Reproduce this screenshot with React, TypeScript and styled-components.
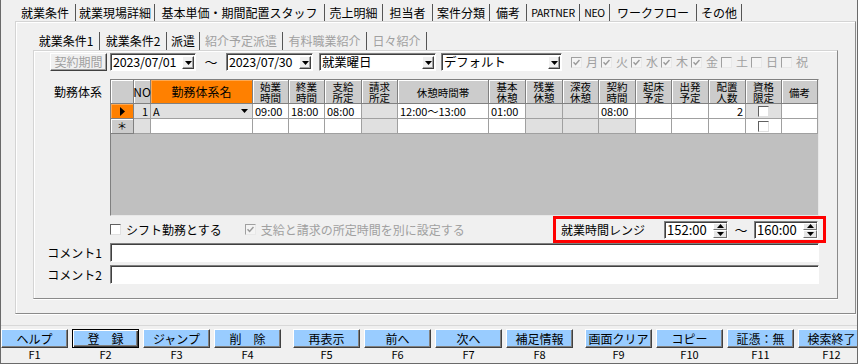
import React from "react";
import styled, { createGlobalStyle } from "styled-components";

const GlobalStyle = createGlobalStyle`
  html, body {
    margin: 0;
    padding: 0;
    background: #f0f0f0;
  }
  body {
    font-family: "Noto Sans CJK JP", "Noto Sans", sans-serif;
    font-size: 12px;
    color: #000;
  }
  * {
    box-sizing: border-box;
  }
`;

const OUTER_TABS: [string, number, boolean][] = [
  ["就業条件", 61, false],
  ["就業現場詳細", 79, false],
  ["基本単価・期間配置スタッフ", 170, false],
  ["売上明細", 58, false],
  ["担当者", 50, false],
  ["案件分類", 57, false],
  ["備考", 37, false],
  ["PARTNER", 53, true],
  ["NEO", 30, true],
  ["ワークフロー", 87, false],
  ["その他", 45, false],
];

const INNER_TABS: [string, number, boolean][] = [
  ["就業条件1", 67, false],
  ["就業条件2", 67, false],
  ["派遣", 33, false],
  ["紹介予定派遣", 83, true],
  ["有料職業紹介", 84, true],
  ["日々紹介", 60, true],
];

const DAYS: [string, boolean][] = [
  ["月", true],
  ["火", true],
  ["水", true],
  ["木", true],
  ["金", true],
  ["土", false],
  ["日", false],
  ["祝", false],
];

const COLS = [23, 17, 102, 36, 36, 37, 36, 91, 37, 37, 36, 37, 36, 37, 37, 36, 36];

const HEADERS: string[][] = [
  ["始業", "時間"],
  ["終業", "時間"],
  ["支給", "所定"],
  ["請求", "所定"],
  ["休憩時間帯"],
  ["基本", "休憩"],
  ["残業", "休憩"],
  ["深夜", "休憩"],
  ["契約", "時間"],
  ["起床", "予定"],
  ["出発", "予定"],
  ["配置", "人数"],
  ["資格", "限定"],
  ["備考"],
];

type CellData = { text?: string; muted?: boolean; right?: boolean; check?: boolean };

const ROW1: CellData[] = [
  { text: "09:00" },
  { text: "18:00" },
  { text: "08:00" },
  { muted: true },
  { text: "12:00～13:00" },
  { text: "01:00" },
  { muted: true },
  { muted: true },
  { text: "08:00" },
  {},
  {},
  { text: "2", right: true },
  { muted: true, check: true },
  {},
];

const ROW2: CellData[] = [
  {},
  {},
  {},
  { muted: true },
  {},
  {},
  { muted: true },
  { muted: true },
  { muted: true },
  {},
  {},
  {},
  { check: true },
  {},
];

const FKEYS: { label: string; key: string; primary?: boolean }[][] = [
  [
    { label: "ヘルプ", key: "F1" },
    { label: "登　録", key: "F2", primary: true },
    { label: "ジャンプ", key: "F3" },
    { label: "削　除", key: "F4" },
  ],
  [
    { label: "再表示", key: "F5" },
    { label: "前へ", key: "F6" },
    { label: "次へ", key: "F7" },
    { label: "補足情報", key: "F8" },
  ],
  [
    { label: "画面クリア", key: "F9" },
    { label: "コピー", key: "F10" },
    { label: "証憑：無", key: "F11" },
    { label: "検索終了", key: "F12" },
  ],
];

const DownArrow = () => (
  <svg width="7" height="4" viewBox="0 0 7 4">
    <polygon points="0,0 7,0 3.5,4" fill="#000" />
  </svg>
);

const UpArrow = () => (
  <svg width="7" height="4" viewBox="0 0 7 4">
    <polygon points="0,4 7,4 3.5,0" fill="#000" />
  </svg>
);

const RightArrow = () => (
  <svg width="5" height="9" viewBox="0 0 5 9">
    <polygon points="0,0 5,4.5 0,9" fill="#000" />
  </svg>
);

const CheckMark = ({ color }: { color: string }) => (
  <svg width="7" height="7" viewBox="0 0 7 7">
    <path d="M0.5 3.2 L2.6 5.4 L6.5 1" stroke={color} strokeWidth="1.5" fill="none" />
  </svg>
);

const Check: React.FC<{ checked?: boolean; disabled?: boolean }> = ({ checked, disabled }) => (
  <CheckBox $disabled={disabled}>
    {checked && <CheckMark color={disabled ? "#9a9a9a" : "#000"} />}
  </CheckBox>
);

const Spinner: React.FC<{ value: string }> = ({ value }) => (
  <Spin>
    <SpinValue>{value}</SpinValue>
    <SpinButtons>
      <SpinBtn>
        <UpArrow />
      </SpinBtn>
      <SpinBtn>
        <DownArrow />
      </SpinBtn>
    </SpinButtons>
  </Spin>
);

const DropDown: React.FC<{ value: string; w: number; gap?: number }> = ({ value, w, gap }) => (
  <Combo $w={w} $gap={gap}>
    <ComboText>{value}</ComboText>
    <ComboArrow>
      <DownArrow />
    </ComboArrow>
  </Combo>
);

const App: React.FC = () => {
  return (
    <>
      <GlobalStyle />
      <Window>
        <TopTabs>
          {OUTER_TABS.map(([t, w, narrow]) => (
            <TopTab key={t} $w={w} $narrow={narrow}>
              {t}
            </TopTab>
          ))}
        </TopTabs>

        <OuterPanel>
          <InnerTabs>
            {INNER_TABS.map(([t, w, off]) => (
              <InnerTab key={t} $w={w} $disabled={off}>
                {t}
              </InnerTab>
            ))}
          </InnerTabs>

          <InnerPanel>
            <ControlRow>
              <LabelCell $pad={3}>
                <PeriodButton>契約期間</PeriodButton>
              </LabelCell>
              <DropDown value="2023/07/01" w={86} />
              <Tilde $w={30}>～</Tilde>
              <DropDown value="2023/07/30" w={87} gap={6} />
              <DropDown value="就業曜日" w={117} gap={5} />
              <DropDown value="デフォルト" w={121} gap={9} />
              <DayList>
                {DAYS.map(([d, on]) => (
                  <DayItem key={d}>
                    <Check checked={on} disabled />
                    <span>{d}</span>
                  </DayItem>
                ))}
              </DayList>
            </ControlRow>

            <GridRow>
              <LabelCell $pad={8} $top>
                勤務体系
              </LabelCell>
              <Grid>
                <HeadCell />
                <HeadCell>NO</HeadCell>
                <HeadCell $accent>勤務体系名</HeadCell>
                {HEADERS.map((lines) => (
                  <HeadCell key={lines.join("")}>
                    {lines.map((l) => (
                      <HeadLine key={l}>{l}</HeadLine>
                    ))}
                  </HeadCell>
                ))}

                <RowMark $current>
                  <RightArrow />
                </RowMark>
                <Cell $muted $right>
                  1
                </Cell>
                <Cell $muted $between>
                  <span>A</span>
                  <DownArrow />
                </Cell>
                {ROW1.map((c, i) => (
                  <Cell key={i} $muted={c.muted} $right={c.right} $center={c.check}>
                    {c.check ? <Check /> : c.text}
                  </Cell>
                ))}

                <RowMark>＊</RowMark>
                <Cell $muted />
                <Cell />
                {ROW2.map((c, i) => (
                  <Cell key={i} $muted={c.muted} $right={c.right} $center={c.check}>
                    {c.check ? <Check /> : c.text}
                  </Cell>
                ))}
              </Grid>
            </GridRow>

            <OptionRow>
              <LabelCell $pad={0} />
              <OptionItem>
                <Check />
                <span>シフト勤務とする</span>
              </OptionItem>
              <OptionItem $disabled $gap={23}>
                <Check checked disabled />
                <span>支給と請求の所定時間を別に設定する</span>
              </OptionItem>
              <RangeBox>
                <RangeLabel>就業時間レンジ</RangeLabel>
                <Spinner value="152:00" />
                <Tilde $w={26}>～</Tilde>
                <Spinner value="160:00" />
              </RangeBox>
            </OptionRow>

            <CommentRow>
              <LabelCell $pad={8}>コメント1</LabelCell>
              <TextInput />
            </CommentRow>
            <CommentRow $gap={3}>
              <LabelCell $pad={8}>コメント2</LabelCell>
              <TextInput />
            </CommentRow>
          </InnerPanel>
        </OuterPanel>

        <FunctionBar>
          {FKEYS.map((group, gi) => (
            <FGroup key={gi}>
              {group.map((k) => (
                <FKey key={k.key}>
                  <FButton $primary={k.primary}>{k.label}</FButton>
                  <FLabel>{k.key}</FLabel>
                </FKey>
              ))}
            </FGroup>
          ))}
        </FunctionBar>
      </Window>
    </>
  );
};

const Window = styled.div`
  width: 858px;
  height: 364px;
  display: flex;
  flex-direction: column;
  background: #f0f0f0;
  border: 1px solid #6a6a6a;
  border-top: none;
  overflow: hidden;
`;

const TopTabs = styled.div`
  flex: none;
  display: flex;
  align-items: flex-end;
  height: 21px;
  padding-left: 14px;
`;

const TopTab = styled.div<{ $w: number; $narrow?: boolean }>`
  width: ${(p) => p.$w}px;
  height: 17px;
  display: flex;
  align-items: center;
  justify-content: center;
  border-right: 1px solid #555;
  font-size: ${(p) => (p.$narrow ? 10.5 : 12)}px;
  letter-spacing: ${(p) => (p.$narrow ? "-0.3px" : "0")};
  line-height: 17px;
  white-space: nowrap;
`;

const OuterPanel = styled.div`
  flex: none;
  height: 293px;
  margin: 0 1px 0 14px;
  padding: 10px 17px 14px 17px;
  display: flex;
  flex-direction: column;
  border-style: solid;
  border-width: 1px;
  border-color: #d4d4d4 #8a8a8a #8a8a8a #d4d4d4;
  box-shadow: inset 1px 1px 0 #fff, 0 1px 0 #fff;
`;

const InnerTabs = styled.div`
  flex: none;
  display: flex;
  height: 18px;
`;

const InnerTab = styled.div<{ $w: number; $disabled?: boolean }>`
  width: ${(p) => p.$w}px;
  display: flex;
  align-items: center;
  justify-content: center;
  border-right: 1px solid #555;
  color: ${(p) => (p.$disabled ? "#a0a0a0" : "#000")};
  font-size: 12px;
  line-height: 18px;
  white-space: nowrap;
`;

const InnerPanel = styled.div`
  flex: 1;
  padding: 2px 18px 0 0;
  display: flex;
  flex-direction: column;
  border-style: solid;
  border-width: 1px;
  border-color: #d4d4d4 #8a8a8a #8a8a8a #d4d4d4;
  box-shadow: inset 1px 1px 0 #fff, 0 1px 0 #fff;
`;

const LabelCell = styled.div<{ $pad: number; $top?: boolean }>`
  flex: none;
  width: 76px;
  display: flex;
  justify-content: flex-end;
  align-items: ${(p) => (p.$top ? "flex-start" : "center")};
  padding-right: ${(p) => p.$pad}px;
  padding-top: ${(p) => (p.$top ? 6 : 0)}px;
  font-size: 12px;
  line-height: 14px;
  white-space: nowrap;
`;

const ControlRow = styled.div`
  display: flex;
  align-items: center;
  height: 18px;
`;

const PeriodButton = styled.div`
  width: 57px;
  height: 18px;
  display: flex;
  align-items: center;
  justify-content: center;
  background: #f0f0f0;
  color: #a0a0a0;
  font-size: 12px;
  border: 1px solid;
  border-color: #fff #404040 #404040 #fff;
  box-shadow: inset -1px -1px 0 #a0a0a0;
`;

const Combo = styled.div<{ $w: number; $gap?: number }>`
  flex: none;
  width: ${(p) => p.$w}px;
  height: 18px;
  margin-right: ${(p) => p.$gap ?? 0}px;
  display: flex;
  background: #fff;
  border: 1px solid;
  border-color: #808080 #fff #fff #808080;
  box-shadow: inset 1px 1px 0 #404040;
`;

const ComboText = styled.span`
  flex: 1;
  min-width: 0;
  padding-left: 2px;
  font-size: 12.5px;
  line-height: 16px;
  letter-spacing: -0.2px;
  white-space: nowrap;
`;

const ComboArrow = styled.span`
  flex: none;
  width: 12px;
  margin: 2px 1px 1px 0;
  display: flex;
  align-items: center;
  justify-content: center;
  background: #f0f0f0;
  border: 1px solid;
  border-color: #fff #404040 #404040 #fff;
  box-shadow: inset -1px -1px 0 #a0a0a0;
`;

const Tilde = styled.span<{ $w: number }>`
  flex: none;
  width: ${(p) => p.$w}px;
  text-align: center;
  font-size: 13px;
  line-height: 16px;
`;

const DayList = styled.div`
  display: flex;
`;

const DayItem = styled.div`
  width: 30px;
  display: flex;
  align-items: center;
  gap: 4px;
  color: #a0a0a0;
  font-size: 12px;
  line-height: 14px;
`;

const CheckBox = styled.span<{ $disabled?: boolean }>`
  flex: none;
  width: 11px;
  height: 11px;
  display: inline-flex;
  align-items: center;
  justify-content: center;
  background: ${(p) => (p.$disabled ? "#f4f4f4" : "#fff")};
  border: 1px solid;
  border-color: ${(p) =>
    p.$disabled ? "#a0a0a0 #e8e8e8 #e8e8e8 #a0a0a0" : "#606060 #e0e0e0 #e0e0e0 #606060"};
`;

const GridRow = styled.div`
  display: flex;
  margin-top: 8px;
`;

const Grid = styled.div`
  width: 709px;
  height: 137px;
  display: grid;
  grid-template-columns: ${COLS.map((c) => `${c}px`).join(" ")};
  grid-template-rows: 24px 15px 15px;
  align-content: start;
  background: #c0c0c0;
  border: 1px solid;
  border-color: #808080 #e8e8e8 #e8e8e8 #808080;
`;

const HeadCell = styled.div<{ $accent?: boolean }>`
  display: flex;
  flex-direction: column;
  align-items: center;
  justify-content: center;
  text-align: center;
  font-size: 12px;
  line-height: 14px;
  padding-top: 1px;
  background: ${(p) => (p.$accent ? "#ff8000" : "#cccccc")};
  border-right: 1px solid #808080;
  border-bottom: 1px solid #808080;
  box-shadow: inset 1px 1px 0 ${(p) => (p.$accent ? "#ffa850" : "#fff")};
`;

const HeadLine = styled.span`
  display: block;
  height: 11px;
  font-size: 10.5px;
  line-height: 11px;
  white-space: nowrap;
`;

const RowMark = styled.div<{ $current?: boolean }>`
  display: flex;
  align-items: center;
  justify-content: center;
  font-size: 10px;
  line-height: 14px;
  background: ${(p) => (p.$current ? "#ff8000" : "#cccccc")};
  border-right: 1px solid #808080;
  border-bottom: 1px solid #808080;
  box-shadow: inset 1px 1px 0 ${(p) => (p.$current ? "#ffa850" : "#fff")};
`;

const Cell = styled.div<{ $muted?: boolean; $right?: boolean; $center?: boolean; $between?: boolean }>`
  display: flex;
  align-items: center;
  justify-content: ${(p) =>
    p.$between ? "space-between" : p.$center ? "center" : p.$right ? "flex-end" : "flex-start"};
  padding: 0 ${(p) => (p.$between ? 4 : 2)}px 0 2px;
  background: ${(p) => (p.$muted ? "#e0e0e0" : "#fff")};
  border-right: 1px solid #a0a0a0;
  border-bottom: 1px solid #a0a0a0;
  font-size: 11px;
  line-height: 14px;
  white-space: nowrap;
  overflow: hidden;
`;

const OptionRow = styled.div`
  width: 792px;
  height: 27px;
  display: flex;
  align-items: center;
`;

const OptionItem = styled.div<{ $disabled?: boolean; $gap?: number }>`
  display: flex;
  align-items: center;
  gap: 5px;
  margin-left: ${(p) => p.$gap ?? 0}px;
  color: ${(p) => (p.$disabled ? "#a0a0a0" : "#000")};
  font-size: 12px;
  line-height: 14px;
  white-space: nowrap;
`;

const RangeBox = styled.div`
  margin-left: auto;
  width: 273px;
  height: 27px;
  display: flex;
  align-items: center;
  padding: 0 5px;
  border: 3px solid #ff0000;
`;

const RangeLabel = styled.span`
  width: 103px;
  font-size: 12px;
  line-height: 14px;
  white-space: nowrap;
`;

const Spin = styled.div`
  flex: none;
  width: 64px;
  height: 18px;
  display: flex;
  background: #fff;
  border: 1px solid;
  border-color: #808080 #fff #fff #808080;
  box-shadow: inset 1px 1px 0 #404040;
`;

const SpinValue = styled.span`
  flex: 1;
  padding-left: 2px;
  font-size: 13px;
  line-height: 16px;
`;

const SpinButtons = styled.div`
  width: 14px;
  margin: 1px 0 0 0;
  display: flex;
  flex-direction: column;
`;

const SpinBtn = styled.div`
  flex: 1;
  display: flex;
  align-items: center;
  justify-content: center;
  background: #e6e6e6;
  border: 1px solid;
  border-color: #fff #707070 #707070 #fff;
`;

const CommentRow = styled.div<{ $gap?: number }>`
  display: flex;
  height: 19px;
  margin-top: ${(p) => p.$gap ?? 0}px;
`;

const TextInput = styled.div`
  width: 709px;
  height: 19px;
  background: #fff;
  border: 1px solid;
  border-color: #808080 #fff #fff #808080;
  box-shadow: inset 1px 1px 0 #404040;
`;

const FunctionBar = styled.div`
  flex: none;
  margin-top: 11px;
  padding-top: 3px;
  border-top: 1px solid #d8d8d8;
  display: flex;
  gap: 12px;
`;

const FGroup = styled.div`
  display: flex;
  gap: 4px;
`;

const FKey = styled.div`
  width: 67px;
  flex: none;
  display: flex;
  flex-direction: column;
`;

const FButton = styled.div<{ $primary?: boolean }>`
  height: 19px;
  display: flex;
  align-items: center;
  justify-content: center;
  background: #99ccff;
  font-size: 12px;
  line-height: 17px;
  white-space: nowrap;
  border: 1px solid;
  border-color: ${(p) => (p.$primary ? "#000" : "#fff #404040 #404040 #fff")};
  box-shadow: ${(p) =>
    p.$primary
      ? "inset 1px 1px 0 #fff, inset -1px -1px 0 #404040, inset -2px -2px 0 #808080"
      : "inset -1px -1px 0 #808080"};
`;

const FLabel = styled.div`
  height: 13px;
  text-align: center;
  font-size: 11px;
  line-height: 13px;
`;

export default App;
